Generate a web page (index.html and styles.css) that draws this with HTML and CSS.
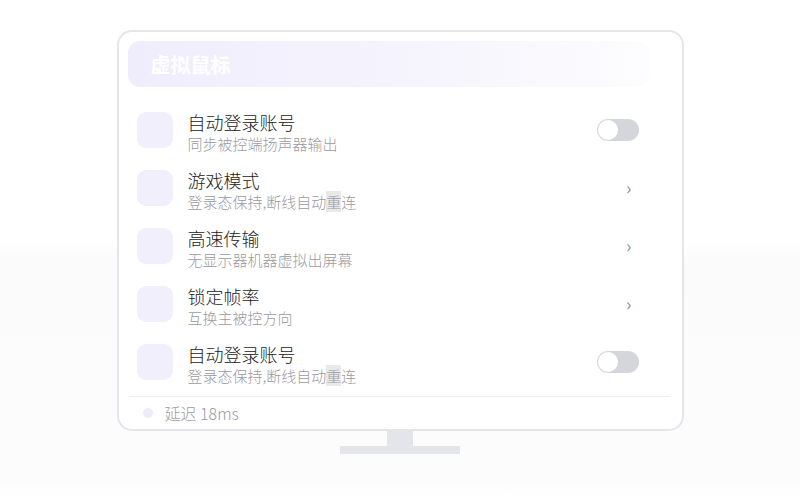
FILE: index.html
```html
<!DOCTYPE html>
<html>
<head>
    <title>虚拟鼠标</title>
    <link rel="stylesheet" href="styles.css">
</head>
<body>
    <div class="stage">
        <div class="monitor">
            <div class="screen">
                <div class="header">虚拟鼠标</div>

                <div class="list">
                    <div class="row">
                        <div class="icon"></div>
                        <div class="text">
                            <div class="title">自动登录账号</div>
                            <div class="sub">同步被控端扬声器输出</div>
                        </div>
                        <div class="toggle"><span class="knob"></span></div>
                    </div>
                    <div class="row">
                        <div class="icon"></div>
                        <div class="text">
                            <div class="title">游戏模式</div>
                            <div class="sub">登录态保持,断线自动<span class="mark">重</span>连</div>
                        </div>
                        <div class="chevron">›</div>
                    </div>
                    <div class="row">
                        <div class="icon"></div>
                        <div class="text">
                            <div class="title">高速传输</div>
                            <div class="sub">无显示器机器虚拟出屏幕</div>
                        </div>
                        <div class="chevron">›</div>
                    </div>
                    <div class="row">
                        <div class="icon"></div>
                        <div class="text">
                            <div class="title">锁定帧率</div>
                            <div class="sub">互换主被控方向</div>
                        </div>
                        <div class="chevron">›</div>
                    </div>
                    <div class="row">
                        <div class="icon"></div>
                        <div class="text">
                            <div class="title">自动登录账号</div>
                            <div class="sub">登录态保持,断线自动<span class="mark">重</span>连</div>
                        </div>
                        <div class="toggle"><span class="knob"></span></div>
                    </div>
                </div>

                <div class="footer">
                    <span class="dot"></span>
                    <span>延迟 18ms</span>
                </div>
            </div>
            <div class="neck"></div>
            <div class="base"></div>
        </div>
    </div>
</body>
</html>
```

FILE: styles.css
```css
body {
    margin: 0;
    font-family: "Noto Sans CJK SC", "Noto Sans", sans-serif;
    background: linear-gradient(#ffffff 0, #ffffff 240px, #fbfbfc 260px, #fcfcfd 480px, #ffffff 500px);
    height: 500px;
    overflow: hidden;
}
.stage {
    display: flex;
    justify-content: center;
    padding-top: 30px;
}
.monitor {
    display: flex;
    flex-direction: column;
    align-items: center;
}
.screen {
    width: 544px;
    height: 388px;
    padding: 9px 10px 0 9px;
    border: 2px solid #e4e6eb;
    border-radius: 15px;
    background: #fff;
    display: flex;
    flex-direction: column;
}
.header {
    height: 46px;
    width: 521px;
    box-sizing: border-box;
    padding-left: 23px;
    display: flex;
    align-items: center;
    border-radius: 12px;
    background: linear-gradient(90deg, #efedfc 0%, #f6f5fd 60%, #fdfdff 100%);
    color: #fff;
    font-size: 20px;
    font-weight: bold;
}
.list {
    padding-top: 25px;
    display: flex;
    flex-direction: column;
    gap: 22px;
}
.row {
    display: flex;
    align-items: center;
    height: 36px;
    padding-left: 9px;
    padding-right: 33px;
}
.icon {
    width: 36px;
    height: 36px;
    border-radius: 9px;
    background: #f2effd;
    flex-shrink: 0;
}
.text {
    flex: 1;
    margin-left: 15px;
    margin-top: 4px;
}
.title {
    font-size: 18px;
    line-height: 24px;
    color: #222;
    font-weight: 300;
}
.sub {
    font-size: 15px;
    line-height: 20px;
    color: #9a9aa2;
    font-weight: 300;
}
.mark {
    background: #e9e9ec;
}
.toggle {
    width: 42px;
    height: 22px;
    border-radius: 11px;
    background: #d4d6dc;
    display: flex;
    align-items: center;
    padding-left: 1px;
    box-sizing: border-box;
}
.knob {
    width: 20px;
    height: 20px;
    border-radius: 50%;
    background: #fff;
}
.chevron {
    color: #8b8f98;
    font-size: 18px;
    margin-right: 7px;
    margin-top: -3px;
}
.footer {
    margin: 16px 2px 0 1px;
    border-top: 1px solid #eceef1;
    padding: 4px 0 0 14px;
    display: flex;
    align-items: center;
    gap: 12px;
    font-size: 16px;
    font-weight: 300;
    color: #9a9aa2;
}
.dot {
    width: 10px;
    height: 10px;
    border-radius: 50%;
    background: #eeebfb;
}
.neck {
    width: 26px;
    height: 15px;
    background: #e3e5ea;
}
.base {
    width: 120px;
    height: 8px;
    background: #e3e5ea;
}
```
